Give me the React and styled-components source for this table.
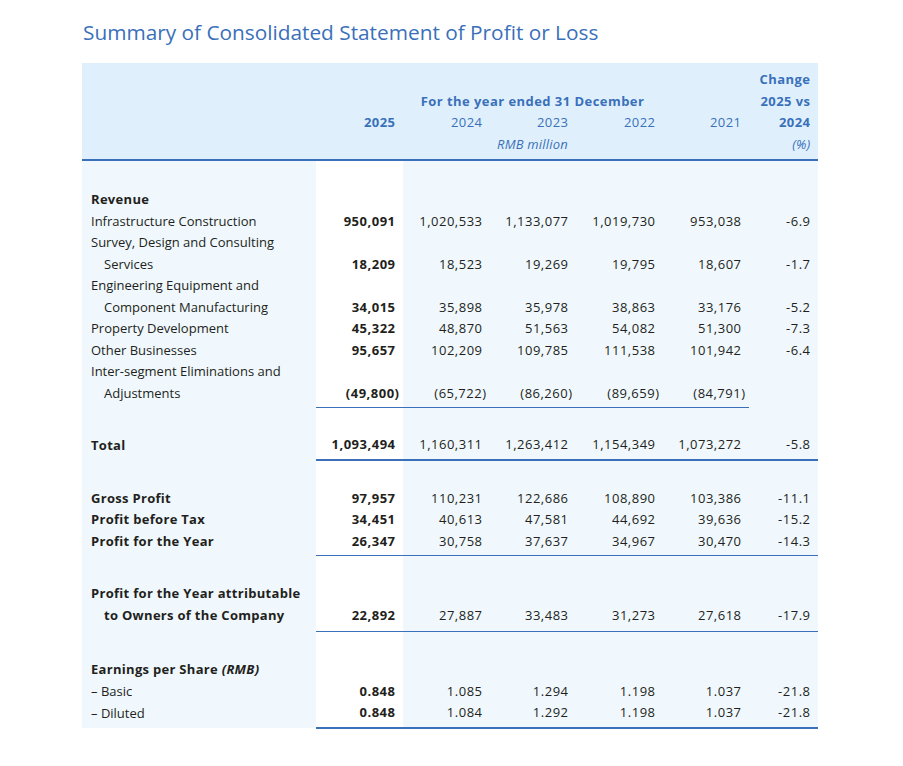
import React from "react";
import styled, { createGlobalStyle } from "styled-components";

const GlobalStyle = createGlobalStyle`
  body {
    margin: 0;
    background: #fff;
    font-family: "Open Sans", "Liberation Sans", sans-serif;
    color: #231f20;
  }
`;

const HEAD_BG = "#dff0fc";
const BODY_BG = "#f0f8fd";
const BLUE = "#3a70b9";

const rows = [
  { spacer: 28 },
  { label: "Revenue", bold: true },
  { label: "Infrastructure Construction", values: ["950,091", "1,020,533", "1,133,077", "1,019,730", "953,038", "-6.9"] },
  { label: "Survey, Design and Consulting" },
  { label: "Services", indent: true, values: ["18,209", "18,523", "19,269", "19,795", "18,607", "-1.7"] },
  { label: "Engineering Equipment and" },
  { label: "Component Manufacturing", indent: true, values: ["34,015", "35,898", "35,978", "38,863", "33,176", "-5.2"] },
  { label: "Property Development", values: ["45,322", "48,870", "51,563", "54,082", "51,300", "-7.3"] },
  { label: "Other Businesses", values: ["95,657", "102,209", "109,785", "111,538", "101,942", "-6.4"] },
  { label: "Inter-segment Eliminations and" },
  { label: "Adjustments", indent: true, values: ["(49,800)", "(65,722)", "(86,260)", "(89,659)", "(84,791)", ""], rule: "thin", open: true },
  { spacer: 26 },
  { label: "Total", bold: true, values: ["1,093,494", "1,160,311", "1,263,412", "1,154,349", "1,073,272", "-5.8"], rule: "thick" },
  { spacer: 27 },
  { label: "Gross Profit", bold: true, values: ["97,957", "110,231", "122,686", "108,890", "103,386", "-11.1"] },
  { label: "Profit before Tax", bold: true, values: ["34,451", "40,613", "47,581", "44,692", "39,636", "-15.2"] },
  { label: "Profit for the Year", bold: true, values: ["26,347", "30,758", "37,637", "34,967", "30,470", "-14.3"], rule: "thin" },
  { spacer: 27 },
  { label: "Profit for the Year attributable", bold: true },
  { label: "to Owners of the Company", bold: true, indent: true, values: ["22,892", "27,887", "33,483", "31,273", "27,618", "-17.9"], rule: "thin", gap: 5 },
  { spacer: 27 },
  { label: <>Earnings per Share <em>(RMB)</em></>, bold: true },
  { label: "– Basic", values: ["0.848", "1.085", "1.294", "1.198", "1.037", "-21.8"] },
  { label: "– Diluted", values: ["0.848", "1.084", "1.292", "1.198", "1.037", "-21.8"], rule: "thick" },
];

const App = () => {
  return (
    <Page>
      <GlobalStyle />
      <Title>Summary of Consolidated Statement of Profit or Loss</Title>
      <Table>
        <colgroup>
          <Col $w={234} />
          <Col $w={87} />
          <Col $w={87} />
          <Col $w={86} />
          <Col $w={87} />
          <Col $w={86} />
          <Col $w={69} />
        </colgroup>
        <thead>
          <tr>
            <HeadCell $top colSpan={6} />
            <HeadCell $top $bold>Change</HeadCell>
          </tr>
          <tr>
            <HeadCell />
            <HeadCell colSpan={5} $bold $center>For the year ended 31 December</HeadCell>
            <HeadCell $bold>2025 vs</HeadCell>
          </tr>
          <tr>
            <HeadCell />
            <HeadCell $bold>2025</HeadCell>
            <HeadCell>2024</HeadCell>
            <HeadCell>2023</HeadCell>
            <HeadCell>2022</HeadCell>
            <HeadCell>2021</HeadCell>
            <HeadCell $bold>2024</HeadCell>
          </tr>
          <tr>
            <HeadCell $last />
            <HeadCell $last colSpan={5} $center $italic>RMB million</HeadCell>
            <HeadCell $last $italic>(%)</HeadCell>
          </tr>
        </thead>
        <tbody>
          {rows.map((row, i) =>
            row.spacer ? (
              <tr key={i}>
                {Array.from({ length: 7 }).map((_, c) => (
                  <Spacer key={c} $h={row.spacer} $current={c === 1} />
                ))}
              </tr>
            ) : (
              <tr key={i}>
                <Label $bold={row.bold} $indent={row.indent} $gap={row.rule ? row.gap || 3 : 0}>
                  {row.label}
                </Label>
                {Array.from({ length: 6 }).map((_, c) => {
                  const v = row.values ? row.values[c] : "";
                  return (
                    <Num
                      key={c}
                      $current={c === 0}
                      $bold={c === 0}
                      $paren={v && v.startsWith("(")}
                      $gap={row.rule ? row.gap || 3 : 0}
                      $rule={row.open && c === 5 ? null : row.rule}
                    >
                      {v}
                    </Num>
                  );
                })}
              </tr>
            )
          )}
        </tbody>
      </Table>
    </Page>
  );
};

const Page = styled.div`
  padding: 18px 0 20px 82px;
`;

const Title = styled.h1`
  margin: 0 0 17px 1px;
  font-size: 20.8px;
  font-weight: 400;
  line-height: 28px;
  color: ${BLUE};
`;

const Table = styled.table`
  border-collapse: collapse;
  table-layout: fixed;
  width: 736px;
  font-size: 13px;
`;

const Col = styled.col`
  width: ${(p) => p.$w}px;
`;

const HeadCell = styled.th`
  background: ${HEAD_BG};
  color: ${BLUE};
  padding: ${(p) => (p.$top ? "6px" : "0")} ${(p) => (p.$center ? "0" : "7.5px")}
    ${(p) => (p.$last ? "4px" : "0")} 0;
  line-height: 21.5px;
  letter-spacing: ${(p) => (p.$italic ? "0.2px" : "0.45px")};
  text-align: ${(p) => (p.$center ? "center" : "right")};
  font-weight: ${(p) => (p.$bold ? 700 : 400)};
  font-style: ${(p) => (p.$italic ? "italic" : "normal")};
  border-bottom: ${(p) => (p.$last ? `2px solid ${BLUE}` : "none")};
  white-space: nowrap;
`;

const Spacer = styled.td`
  height: ${(p) => p.$h}px;
  padding: 0;
  background: ${(p) => (p.$current ? "#fff" : BODY_BG)};
`;

const Label = styled.td`
  background: ${BODY_BG};
  padding: 0 0 ${(p) => p.$gap}px ${(p) => (p.$indent ? "22px" : "9px")};
  line-height: 21.5px;
  letter-spacing: ${(p) => (p.$bold ? "0.3px" : "0")};
  font-weight: ${(p) => (p.$bold ? 700 : 400)};
  white-space: nowrap;
  em {
    font-style: italic;
  }
`;

const ruleFor = (r) =>
  r === "thick" ? `2px solid ${BLUE}` : r === "thin" ? `1px solid ${BLUE}` : "none";

const Num = styled.td`
  background: ${(p) => (p.$current ? "#fff" : BODY_BG)};
  padding: 0 ${(p) => (p.$paren ? "3.5px" : "7.5px")} ${(p) => p.$gap}px 0;
  line-height: 21.5px;
  letter-spacing: 0.5px;
  text-align: right;
  font-weight: ${(p) => (p.$bold ? 700 : 400)};
  border-bottom: ${(p) => ruleFor(p.$rule)};
  white-space: nowrap;
`;

export default App;
